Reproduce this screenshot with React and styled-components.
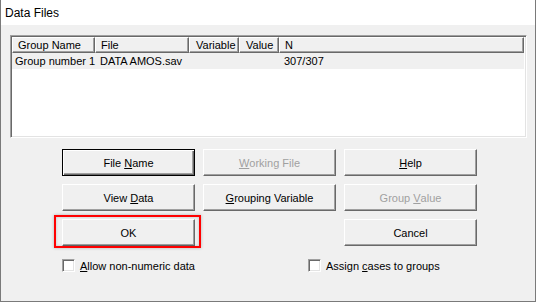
import React from "react";
import styled, { createGlobalStyle } from "styled-components";

const GlobalStyle = createGlobalStyle`
  html, body { margin: 0; padding: 0; background: #ffffff; }
  body { font-family: "Liberation Sans", Arial, sans-serif; }
  #root { width: 536px; height: 302px; }
`;

const Window = styled.div`
  width: 536px;
  height: 302px;
  box-sizing: border-box;
  border: 1px solid #7a7a7a;
  border-top: none;
  display: flex;
  flex-direction: column;
  background: #f0f0f0;
`;

const TitleBar = styled.div`
  height: 25px;
  flex: none;
  background: #ffffff;
  display: flex;
  align-items: center;
  padding-left: 4px;
  font-family: "Liberation Sans", Arial, sans-serif;
  font-size: 12px;
  color: #000;
`;

const Body = styled.div`
  flex: 1;
  padding: 10px 8px 0 9px;
  display: flex;
  flex-direction: column;
  font-size: 11px;
  color: #000;
`;

const ListBox = styled.div`
  width: 517px;
  height: 103px;
  box-sizing: border-box;
  border: 1px solid;
  border-color: #a0a0a0 #ffffff #ffffff #a0a0a0;
  box-shadow: inset 1px 1px 0 #696969, inset -1px -1px 0 #e3e3e3;
  padding: 1px 2px 1px 1px;
  background: #ffffff;
`;

const Row = styled.div`
  display: flex;
  height: ${(p) => (p.$header ? 16 : 16)}px;
  background: #f0f0f0;
`;

const HeaderCell = styled.div`
  box-sizing: border-box;
  width: ${(p) => (p.$w ? `${p.$w}px` : "auto")};
  flex: ${(p) => (p.$w ? "none" : "1")};
  border-top: 1px solid #ffffff;
  border-left: 1px solid #ffffff;
  border-right: 1px solid #696969;
  border-bottom: 1px solid #696969;
  box-shadow: inset -1px -1px 0 #a0a0a0;
  padding-left: ${(p) => p.$pad}px;
  display: flex;
  align-items: center;
  white-space: nowrap;
  overflow: hidden;
`;

const DataCell = styled.div`
  box-sizing: border-box;
  width: ${(p) => (p.$w ? `${p.$w}px` : "auto")};
  flex: ${(p) => (p.$w ? "none" : "1")};
  padding-left: ${(p) => p.$pad}px;
  display: flex;
  align-items: center;
  white-space: nowrap;
`;

const ButtonGrid = styled.div`
  margin: 11px 0 0 52px;
  display: grid;
  grid-template-columns: repeat(3, 133px);
  grid-auto-rows: 27px;
  column-gap: 8px;
  row-gap: 8px;
`;

const Button = styled.button`
  box-sizing: border-box;
  width: 100%;
  height: 100%;
  margin: 0;
  padding: 0;
  grid-column: ${(p) => p.$col || "auto"};
  background: #f0f0f0;
  font-family: "Liberation Sans", Arial, sans-serif;
  font-size: 11px;
  color: ${(p) => (p.disabled ? "#a0a0a0" : "#000000")};
  border: 1px solid;
  border-color: ${(p) =>
    p.$default ? "#000000" : "#ffffff #696969 #696969 #ffffff"};
  box-shadow: ${(p) =>
    p.$default
      ? "inset 1px 1px 0 #ffffff, inset -1px -1px 0 #696969, inset -2px -2px 0 #a0a0a0"
      : "inset -1px -1px 0 #a0a0a0"};
  display: flex;
  align-items: center;
  justify-content: center;
`;

const Highlight = styled.div`
  position: relative;
  grid-column: 1;
  &::after {
    content: "";
    position: absolute;
    left: -8px;
    top: -4px;
    right: -6px;
    bottom: -2px;
    border: 2px solid #ff0000;
    box-shadow: 0 0 3px rgba(0, 0, 0, 0.25), inset 0 0 3px rgba(0, 0, 0, 0.2);
    pointer-events: none;
  }
`;

const Mn = styled.span`
  text-decoration: underline;
  text-underline-offset: 1px;
`;

const CheckRow = styled.div`
  margin: 13px 0 0 52px;
  display: grid;
  grid-template-columns: 246px auto;
`;

const CheckLabel = styled.label`
  display: flex;
  align-items: center;
  gap: 5px;
  height: 13px;
  font-size: 11px;
`;

const CheckBox = styled.span`
  box-sizing: border-box;
  width: 13px;
  height: 13px;
  flex: none;
  background: #ffffff;
  border: 1px solid;
  border-color: #a0a0a0 #ffffff #ffffff #a0a0a0;
  box-shadow: inset 1px 1px 0 #696969, inset -1px -1px 0 #e3e3e3;
`;

const columns = [
  { w: 83, label: "Group Name", hp: 5, dp: 3, value: "Group number 1" },
  { w: 94, label: "File", hp: 5, dp: 5, value: "DATA AMOS.sav" },
  { w: 50, label: "Variable", hp: 6, dp: 5, value: "" },
  { w: 40, label: "Value", hp: 6, dp: 5, value: "" },
  { w: 0, label: "N", hp: 5, dp: 5, value: "307/307" },
];

export default function App() {
  return (
    <>
      <GlobalStyle />
      <Window>
        <TitleBar>Data Files</TitleBar>
        <Body>
          <ListBox>
            <Row $header>
              {columns.map((c) => (
                <HeaderCell key={c.label} $w={c.w} $pad={c.hp}>
                  {c.label}
                </HeaderCell>
              ))}
            </Row>
            <Row>
              {columns.map((c) => (
                <DataCell key={c.label} $w={c.w} $pad={c.dp}>
                  {c.value}
                </DataCell>
              ))}
            </Row>
          </ListBox>

          <ButtonGrid>
            <Button $default>
              File&nbsp;<Mn>N</Mn>ame
            </Button>
            <Button disabled>
              <Mn>W</Mn>orking File
            </Button>
            <Button>
              <Mn>H</Mn>elp
            </Button>
            <Button>
              View&nbsp;<Mn>D</Mn>ata
            </Button>
            <Button>
              <Mn>G</Mn>rouping Variable
            </Button>
            <Button disabled>
              Group&nbsp;<Mn>V</Mn>alue
            </Button>
            <Highlight>
              <Button>OK</Button>
            </Highlight>
            <Button $col={3}>Cancel</Button>
          </ButtonGrid>

          <CheckRow>
            <CheckLabel>
              <CheckBox />
              <span>
                <Mn>A</Mn>llow non-numeric data
              </span>
            </CheckLabel>
            <CheckLabel>
              <CheckBox />
              <span>
                Assign <Mn>c</Mn>ases to groups
              </span>
            </CheckLabel>
          </CheckRow>
        </Body>
      </Window>
    </>
  );
}
